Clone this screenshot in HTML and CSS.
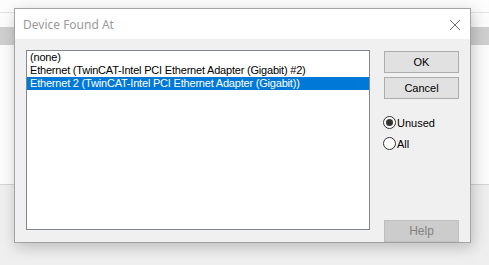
FILE: index.html
```html
<!DOCTYPE html>
<html>
<head>
<meta charset="utf-8">
<link rel="stylesheet" href="styles.css">
</head>
<body>
<div class="app">
  <div class="app-top">
    <div class="rule"></div>
    <div class="bar"></div>
  </div>
  <div class="app-bottom"></div>
</div>

<div class="dialog">
  <div class="titlebar">
    <span class="title">Device Found At</span>
    <svg class="close" width="12" height="12" viewBox="0 0 12 12"><path d="M1 1 L11 11 M11 1 L1 11" stroke="#707070" stroke-width="1" fill="none"/></svg>
  </div>
  <div class="content">
    <div class="listbox">
      <div class="item">(none)</div>
      <div class="item">Ethernet (TwinCAT-Intel PCI Ethernet Adapter (Gigabit) #2)</div>
      <div class="item selected">Ethernet 2 (TwinCAT-Intel PCI Ethernet Adapter (Gigabit))</div>
    </div>
    <div class="side">
      <div class="btn">OK</div>
      <div class="btn">Cancel</div>
      <div class="radios">
        <div class="radio"><span class="circle checked"></span><span>Unused</span></div>
        <div class="radio"><span class="circle"></span><span>All</span></div>
      </div>
      <div class="btn disabled">Help</div>
    </div>
  </div>
</div>
</body>
</html>
```

FILE: styles.css
```css
html, body {
  margin: 0;
  padding: 0;
  width: 489px;
  height: 265px;
  overflow: hidden;
  background: #f0f0f0;
  font-family: "Liberation Sans", Arial, sans-serif;
}
.app {
  display: flex;
  flex-direction: column;
  height: 265px;
}
.app-top {
  height: 185px;
  background: #fcfcfc;
  border-bottom: 1px solid #d4d4d4;
  box-sizing: border-box;
  padding-top: 12px;
}
.rule {
  height: 1px;
  background: #e3e3e3;
}
.bar {
  margin-top: 14px;
  height: 18px;
  background: #cfcfcf;
}
.app-bottom {
  flex: 1;
  background: #efefef;
}
.dialog {
  position: absolute;
  left: 14px;
  top: 8px;
  width: 457px;
  height: 235px;
  box-sizing: border-box;
  border: 1px solid #a3a3a3;
  background: #f0f0f0;
  box-shadow: 2px 4px 14px rgba(0,0,0,0.22);
  display: flex;
  flex-direction: column;
}
.titlebar {
  height: 30px;
  background: #ffffff;
  display: flex;
  align-items: center;
  justify-content: space-between;
  padding: 0 9px 0 8px;
}
.title {
  font-family: "Noto Sans", "Open Sans", sans-serif;
  font-size: 12px;
  color: #9a9a9a;
  padding-top: 1px;
}
.close {
  display: block;
  margin-top: 1px;
}
.content {
  flex: 1;
  display: flex;
  padding: 11px 11px 0 11px;
}
.listbox {
  width: 344px;
  height: 180px;
  box-sizing: border-box;
  border: 1px solid #828790;
  background: #ffffff;
  font-size: 11px;
}
.item {
  height: 13px;
  line-height: 13px;
  padding-left: 3px;
  white-space: nowrap;
  color: #000;
  letter-spacing: -0.2px;
}
.item.selected {
  background: #0078d7;
  color: #ffffff;
}
.side {
  margin-left: 14px;
  width: 75px;
  display: flex;
  flex-direction: column;
  padding-top: 1px;
}
.btn {
  height: 22px;
  box-sizing: border-box;
  border: 1px solid #adadad;
  background: #e1e1e1;
  font-size: 11px;
  display: flex;
  align-items: center;
  justify-content: center;
  color: #000;
}
.btn + .btn {
  margin-top: 4px;
}
.btn.disabled {
  margin-top: auto;
  background: #cccccc;
  border-color: #bfbfbf;
  color: #838383;
  font-size: 12px;
}
.radios {
  margin-top: 17px;
  display: flex;
  flex-direction: column;
  gap: 8px;
}
.radio {
  display: flex;
  align-items: center;
  font-size: 11px;
  height: 13px;
  margin-left: -1px;
}
.circle {
  width: 13px;
  height: 13px;
  box-sizing: border-box;
  border: 1px solid #333;
  border-radius: 50%;
  background: #fff;
  margin-right: 1px;
  position: relative;
}
.circle.checked::after {
  content: "";
  position: absolute;
  left: 2px;
  top: 2px;
  width: 7px;
  height: 7px;
  border-radius: 50%;
  background: #333;
}
```
